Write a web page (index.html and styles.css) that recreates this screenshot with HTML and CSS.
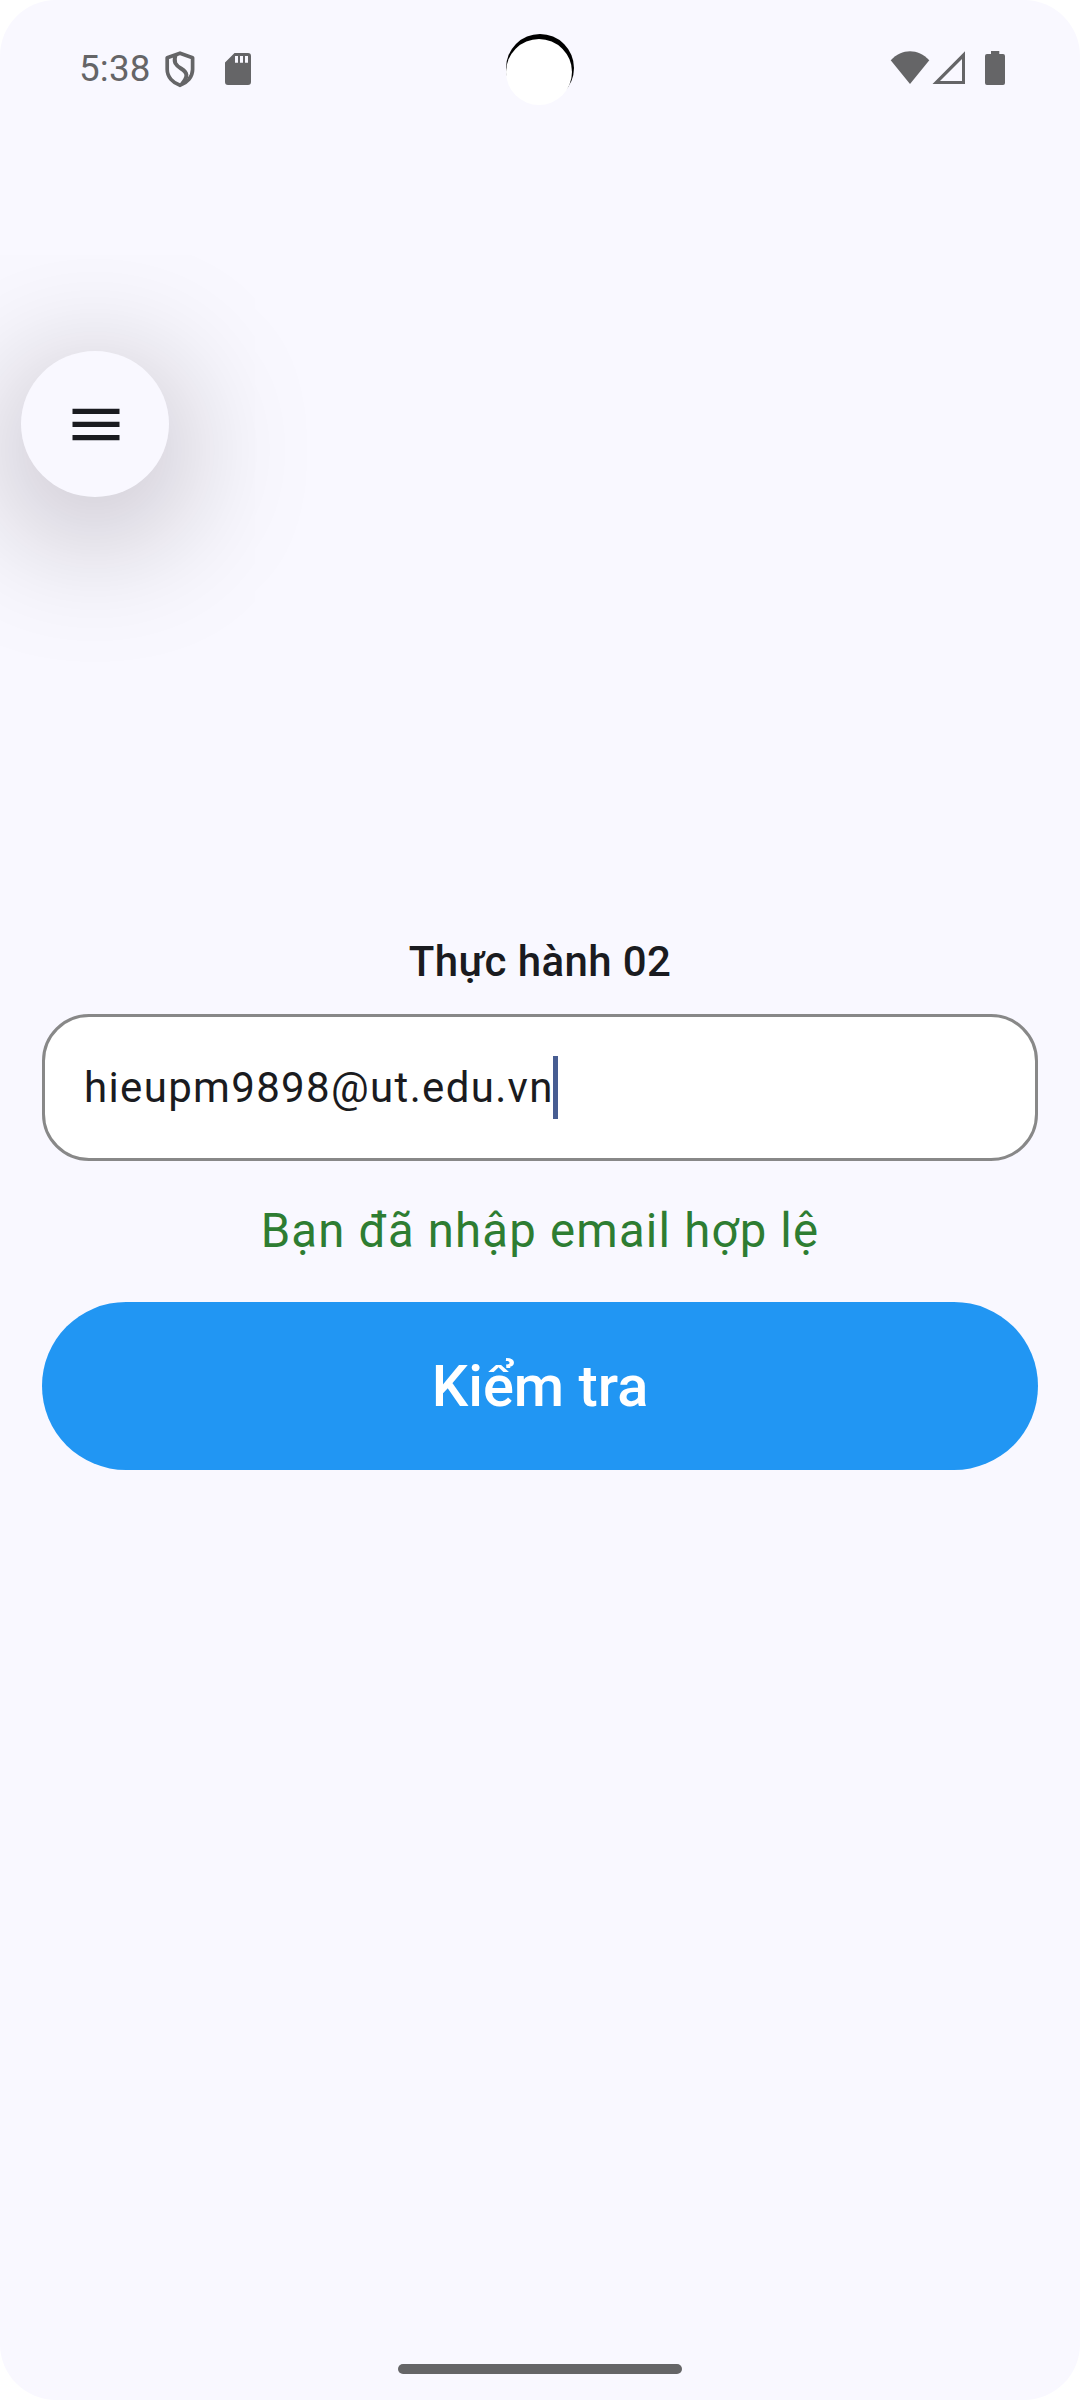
FILE: index.html
```html
<!DOCTYPE html>
<html lang="vi">
<head>
<meta charset="utf-8">
<title>Thực hành 02</title>
<link rel="stylesheet" href="styles.css">
</head>
<body>
<div class="screen">
  <header class="status">
    <span class="time">5:38</span>
    <svg class="shield" width="32" height="38" viewBox="0 0 32 38">
      <path d="M16 3.200 28.600 7.700v11.800C28.600 27 23 33 16 35.300 9 33 3.200 27 3.200 19.500V7.700Z" fill="none" stroke="currentColor" stroke-width="3.700" stroke-linejoin="round"/>
      <path d="M11.500 5C9.300 12.500 11.500 15 17 18.500C23.500 22.500 24.500 26 18 34" fill="none" stroke="currentColor" stroke-width="4"/>
    </svg>
    <svg class="sdcard" width="26" height="32" viewBox="0 0 26 32">
      <path fill="currentColor" fill-rule="evenodd" d="M9.500 0H23a3 3 0 0 1 3 3v26a3 3 0 0 1-3 3H3a3 3 0 0 1-3-3V9.500ZM10 3v6.700h3V3Zm5 0v6.700h3V3Zm5 0v6.700h3V3Z"/>
    </svg>
    <svg class="wifi" width="40" height="34" viewBox="0 0 40 34">
      <path fill="currentColor" d="M.7 9.300C12-2.700 28-2.700 39.300 9.300L20 33Z"/>
    </svg>
    <svg class="signal" width="34" height="34" viewBox="0 0 34 34">
      <path fill="currentColor" fill-rule="evenodd" d="M.5 33 33 .3V33ZM8 30H30V8Z"/>
    </svg>
    <svg class="battery" width="20" height="34" viewBox="0 0 20 34">
      <path fill="currentColor" d="M6 0h8.300v3H18a2 2 0 0 1 2 2v27a2 2 0 0 1-2 2H2a2 2 0 0 1-2-2V5a2 2 0 0 1 2-2h4Z"/>
    </svg>
    <span class="camera"></span>
  </header>
  <button class="menu" aria-label="Menu">
    <svg width="48" height="33" viewBox="0 0 48 33">
      <path fill="currentColor" d="M.5.700h47v5.300H.5zM.5 13.700h47v5.300H.5zM.5 27h47v5.300H.5z"/>
    </svg>
  </button>
  <main class="form">
    <h1 class="title">Thực hành 02</h1>
    <div class="field"><span class="value">hieupm9898@ut.edu.vn</span><span class="caret"></span></div>
    <p class="message">Bạn đã nhập email hợp lệ</p>
    <button class="submit">Kiểm tra</button>
  </main>
  <div class="home"></div>
</div>
</body>
</html>
```
FILE: styles.css
```css
* { box-sizing: border-box; }
body { margin: 0; background: #fff; font-family: Roboto, sans-serif; color: #1a1b20; }
button { border: 0; padding: 0; font-family: inherit; }
.screen {
  width: 1080px;
  height: 2400px;
  border-radius: 56px;
  overflow: hidden;
  background: #f9f8ff;
  display: flex;
  flex-direction: column;
}
.status {
  position: relative;
  height: 137px;
  padding: 0 75px 0 79px;
  display: flex;
  align-items: center;
  color: #656567;
}
.time { width: 85px; font-size: 36.75px; line-height: 44px; letter-spacing: .2px; }
.shield { margin-top: 1px; }
.sdcard { margin: 1px auto 0 29px; }
.signal { margin-left: 2px; }
.battery { margin-left: 19px; }
.wifi, .signal, .battery { margin-top: -1px; }
.camera {
  position: absolute;
  left: 506px;
  top: 34px;
  width: 68px;
  height: 68px;
  border-radius: 50%;
  background: #000;
}
.camera::after {
  content: "";
  position: absolute;
  left: 0;
  top: 5px;
  width: 66px;
  height: 66px;
  border-radius: 50%;
  background: #fff;
}
.menu {
  width: 148px;
  height: 146px;
  margin: 214px 0 0 21px;
  padding-left: 1px;
  border-radius: 50%;
  background: #f9f8ff;
  color: #1a1b20;
  box-shadow: 0 26px 134px 12px rgba(20, 0, 10, .26);
  display: flex;
  align-items: center;
  justify-content: center;
}
.form { margin: 433px 42px 0; display: flex; flex-direction: column; }
.title { margin: 0; font-size: 42px; font-weight: 500; line-height: 63px; text-align: center; letter-spacing: .4px; }
.field {
  height: 147px;
  margin-top: 21px;
  padding-left: 39px;
  border: 3px solid #888;
  border-radius: 47px;
  background: #fff;
  display: flex;
  align-items: center;
}
.value { font-size: 42px; line-height: 63px; letter-spacing: 1.34px; }
.caret { width: 5px; height: 63px; margin-left: -1px; background: #475d92; }
.message { margin: 38px 0 39px; font-size: 47.25px; line-height: 64px; letter-spacing: 1.22px; text-align: center; color: #2e7d32; }
.submit { height: 168px; border-radius: 84px; background: #2196f3; color: #fff; font-size: 57.75px; font-weight: 500; }
.home { width: 284px; height: 10px; margin: auto auto 26px; border-radius: 5px; background: #656567; }
```
